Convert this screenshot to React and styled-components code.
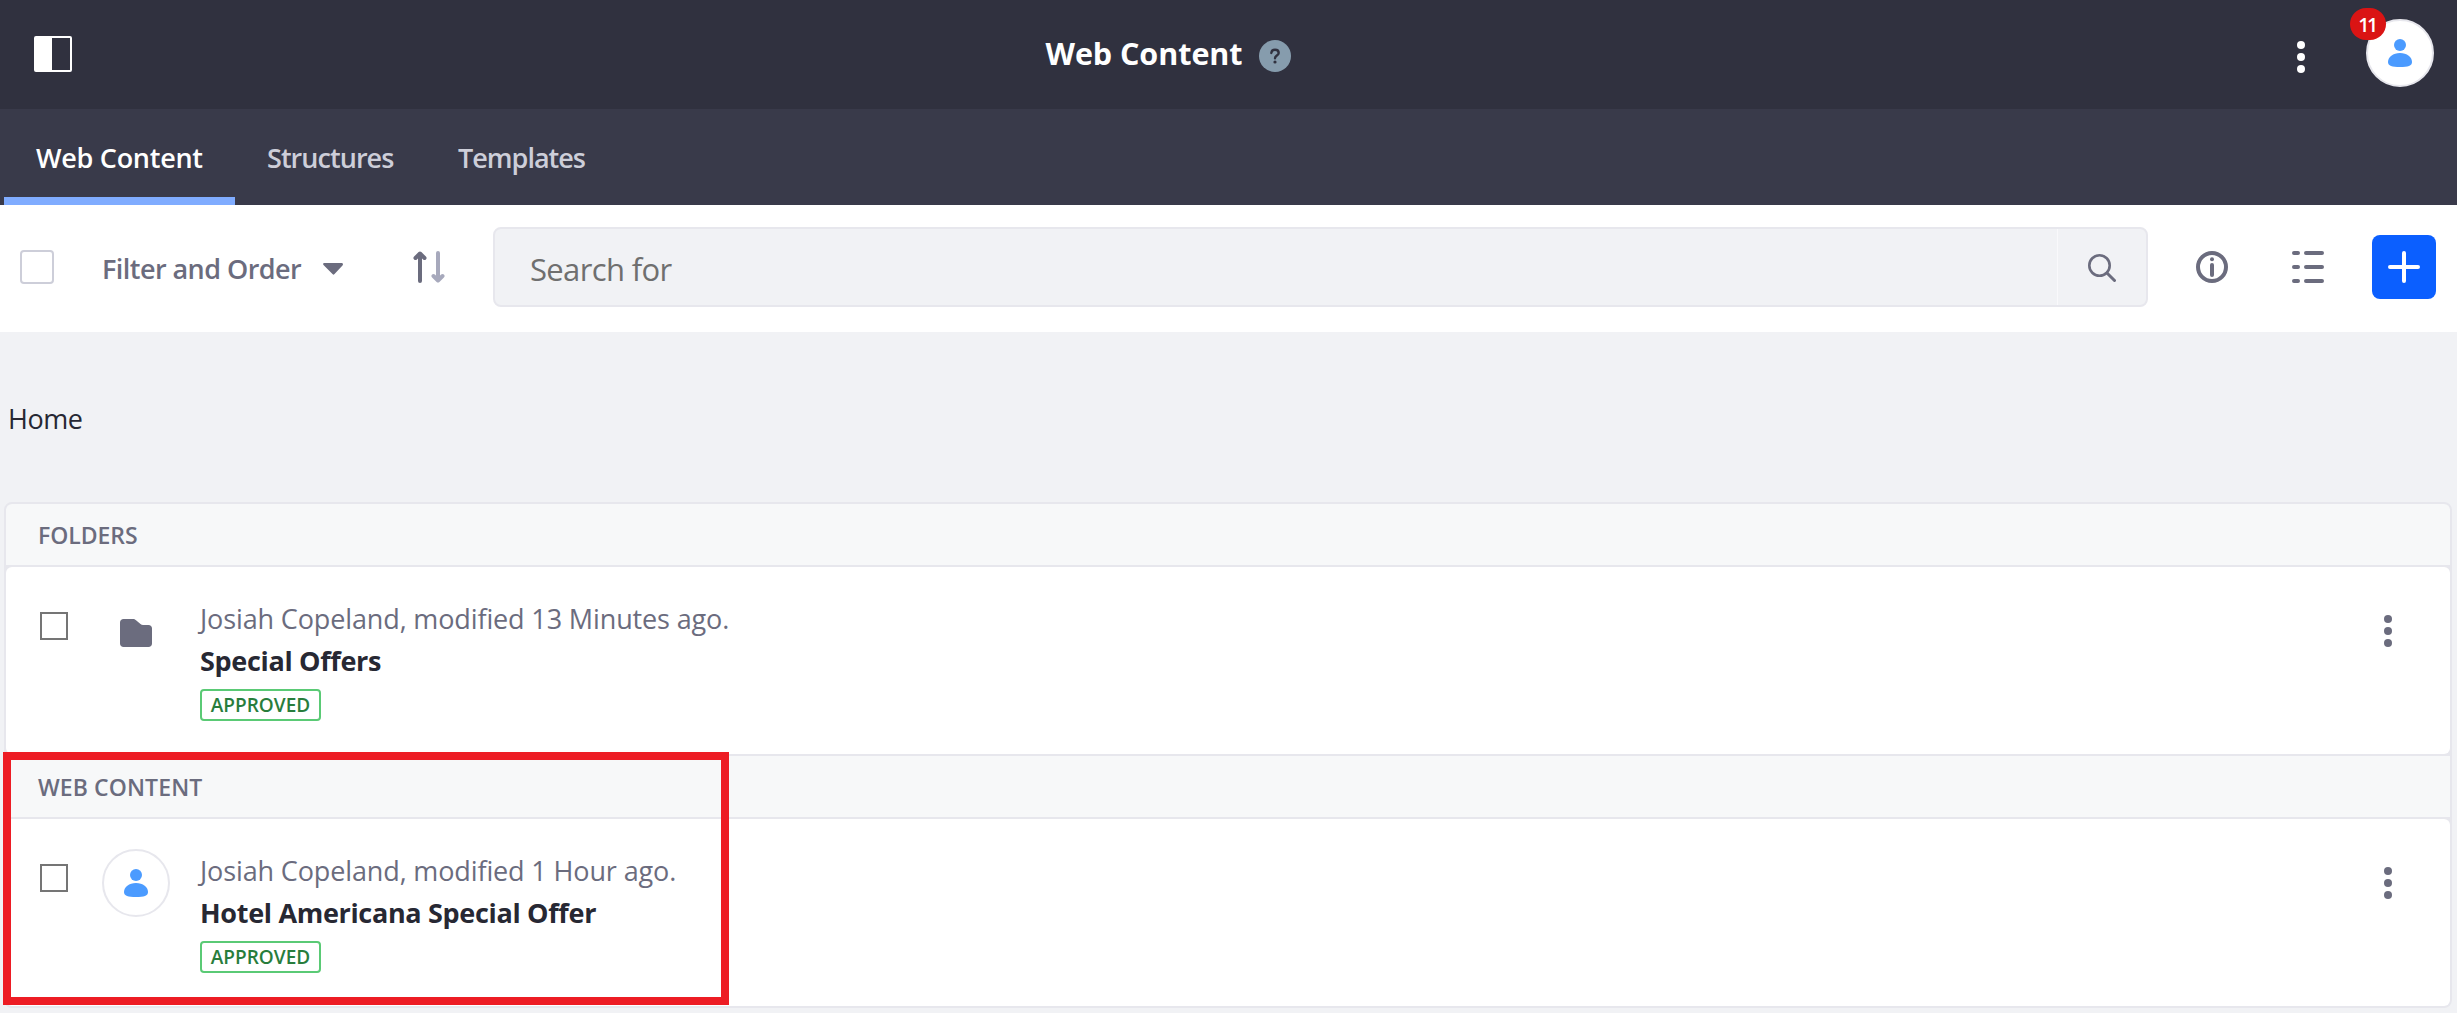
import React from "react";
import styled, { createGlobalStyle } from "styled-components";

const Global = createGlobalStyle`
  * { box-sizing: border-box; }
  body { margin: 0; background: #f1f2f5; color: #272833; font-family: "Open Sans", "Noto Sans", sans-serif; font-size: 27px; overflow: hidden; }
  button { font: inherit; border: 0; background: none; padding: 0; color: inherit; }
`;
const Page = styled.div`height: 1013px; overflow: hidden; display: flex; flex-direction: column;`;
const Header = styled.header`height: 109px; flex: none; background: #30313f; display: grid; grid-template-columns: 1fr auto 1fr; align-items: center; padding: 0 23px 1px 34px;`;
const Title = styled.div`display: flex; align-items: center; gap: 16px; margin-right: 132px;`;
const Text = styled.span`display: inline-block; white-space: nowrap; font-size: ${p => p.$size || 27}px; font-weight: ${p => p.$weight || 400}; letter-spacing: ${p => p.$ls || 0}px; color: ${p => p.$color || "inherit"}; line-height: 42px;`;
const TitleText = styled(Text)`margin-bottom: 2px;`;
const Help = styled.svg`margin-top: 4px;`;
const HeaderRight = styled.div`display: flex; justify-content: flex-end; align-items: center; gap: 61px; margin-left: -132px;`;
const HeaderMenu = styled.button`display: flex; margin-top: 6px;`;
const Avatar = styled.div`width: 68px; height: 68px; flex: none; border-radius: 50%; border: 2px solid #e7e7ed; background: #fff; display: grid; place-items: center; position: relative;`;
const HeaderAvatar = styled(Avatar)`margin-bottom: 2px;`;
const Badge = styled.span`position: absolute; left: -18px; top: -13px; width: 36px; height: 32px; border-radius: 16px; background: #da1414; color: #fff; font-size: 19.5px; font-weight: 600; letter-spacing: -2.5px; padding-right: 2px; line-height: 34px; text-align: center;`;
const Tabs = styled.nav`height: 96px; flex: none; background: #393a4a; display: flex; padding-left: 4px;`;
const Tab = styled.button`height: 96px; width: ${p => p.$w}px; text-align: left; color: ${p => (p.$active ? "#fff" : "#cdced9")}; border-bottom: 8px solid ${p => (p.$active ? "#80acff" : "transparent")}; padding: 10px 0 0 32px;`;
const Toolbar = styled.div`height: 127px; flex: none; background: #fff; display: flex; align-items: center; padding: 0 21px 3px 20px;`;
const SelectAll = styled.span`width: 34px; height: 34px; border: 2px solid #cdced9; border-radius: 4px; margin-right: 48px;`;
const Filter = styled.button`display: flex; align-items: center; justify-content: space-between; width: 241px; color: #6b6c7e; margin-right: 70px; padding-top: 4px;`;
const Search = styled.div`width: 1655px; height: 80px; margin-left: 48px; border: 2px solid #e7e7ed; border-radius: 8px; background: #f1f2f5; display: flex; align-items: stretch;`;
const Placeholder = styled.div`flex: 1; padding: 19px 0 0 35px;`;
const SearchButton = styled.button`width: 89px; border-left: 1px solid #f9f9fb; display: grid; place-items: center; color: #6b6c7e; padding-top: 2px;`;
const Tools = styled.div`display: flex; align-items: center; margin-left: auto; gap: 48px; color: #6b6c7e;`;
const ToolIcon = styled.span`display: flex; margin-right: ${p => p.$mr || 0}px;`;
const Add = styled.button`width: 64px; height: 64px; border-radius: 8px; background: #0b5fff; display: grid; place-items: center;`;
const Crumb = styled.div`height: 170px; flex: none; padding: 66px 0 0 8px;`;
const List = styled.div`margin: 0 5px 0 4px; border: 2px solid #e7e7ed; border-radius: 8px; background: #e7e7ed; position: relative;`;
const Section = styled.div`height: 61px; background: #f7f8f9; border-radius: ${p => (p.$first ? "6px 6px 0 0" : "0")}; padding: 10px 0 0 32px;`;
const Row = styled.div`height: 187px; margin: 2px 0 ${p => (p.$last ? 0 : 2)}px; background: #fff; border-radius: 6px; display: flex; padding: 0 58px 0 34px;`;
const Check = styled.span`width: 28px; height: 28px; border: 2px solid #757575; margin-top: 45px; flex: none;`;
const Sticker = styled.div`width: 68px; height: 68px; margin: 32px 30px 0 34px; flex: none; display: grid; place-items: center;`;
const RowAvatar = styled(Avatar)`margin: 30px 30px 0 34px;`;
const Body = styled.div`flex: 1; display: flex; flex-direction: column; align-items: flex-start; padding-top: 31px;`;
const Label = styled.span`height: 32px; width: 121px; border: 2px solid #5aca75; border-radius: 4px; margin-top: 7px; display: flex; align-items: center; justify-content: center;`;
const RowMenu = styled.button`align-self: flex-start; margin-top: 48px; color: #6b6c7e; display: flex;`;
const Highlight = styled.div`position: absolute; left: -3px; top: 248px; width: 726px; height: 253px; border: 8px solid #ed1c24; pointer-events: none;`;

const Kebab = ({ color = "currentColor" }) => (
  <svg width="8" height="32" fill={color}><circle cx="4" cy="4" r="4" /><circle cx="4" cy="16" r="4" /><circle cx="4" cy="28" r="4" /></svg>
);
const User = () => (
  <svg width="24" height="28" fill="#4b9bff"><circle cx="12" cy="6" r="6" /><path d="M12 14C5 14 0 18 0 23c0 4 4 5 12 5s12-1 12-5c0-5-5-9-12-9z" /></svg>
);

const items = [
  { section: "FOLDERS", sls: -0.05, meta: "Josiah Copeland, modified 13 Minutes ago.", name: "Special Offers", folder: true },
  { section: "WEB CONTENT", sls: 0.1, meta: "Josiah Copeland, modified 1 Hour ago.", name: "Hotel Americana Special Offer" },
];

export default function App() {
  return (
    <Page>
      <Global />
      <Header>
        <svg width="38" height="36"><rect x="1" y="1" width="36" height="34" rx="1" fill="none" stroke="#fff" strokeWidth="2" /><path d="M1 1h17v34H1z" fill="#fff" /></svg>
        <Title>
          <TitleText $size={30.5} $weight={700} $ls={-0.05} $color="#fff">Web Content</TitleText>
          <Help width="32" height="32"><circle cx="16" cy="16" r="16" fill="#869cad" /><path d="M12.300 13c.2-2.200 1.700-3.200 3.700-3.200s3.700 1.200 3.700 3.200c0 2.600-3.700 2.600-3.700 5.200" fill="none" stroke="#30313f" strokeWidth="2.400" strokeLinecap="round" /><circle cx="16" cy="22" r="1.600" fill="#30313f" /></Help>
        </Title>
        <HeaderRight>
          <HeaderMenu><Kebab color="#fff" /></HeaderMenu>
          <HeaderAvatar><User /><Badge>11</Badge></HeaderAvatar>
        </HeaderRight>
      </Header>
      <Tabs>
        <Tab $active $w={231}><Text $weight={600} $ls={-0.27}>Web Content</Text></Tab>
        <Tab $w={191}><Text $weight={600} $ls={-0.95}>Structures</Text></Tab>
        <Tab $w={191}><Text $weight={600} $ls={-1}>Templates</Text></Tab>
      </Tabs>
      <Toolbar>
        <SelectAll />
        <Filter>
          <Text $weight={600} $ls={-0.55}>Filter and Order</Text>
          <svg width="20" height="12"><path d="M1.500 0h17c1.400 0 2 1.400 1 2.400l-8 8.600c-.9 1-1.100 1-2 0l-8.500-8.600C-.5 1.400 0 0 1.500 0z" fill="#6b6c7e" /></svg>
        </Filter>
        <svg width="32" height="32" fill="none" strokeWidth="4" strokeLinecap="round" strokeLinejoin="round"><path d="M7 30V3M2.500 7L7 2.500 11.500 7" stroke="#6b6c7e" /><path d="M25 2v27M20.500 25l4.500 4.500 4.500-4.500" stroke="#a7a9bc" /></svg>
        <Search>
          <Placeholder><Text $size={31} $ls={-0.65} $color="#6f6f6f">Search for</Text></Placeholder>
          <SearchButton><svg width="28" height="28" fill="none" stroke="currentColor" strokeLinecap="round"><circle cx="11.500" cy="11.500" r="10.200" strokeWidth="2.600" /><path d="M19 19l7.500 7.500" strokeWidth="3" /></svg></SearchButton>
        </Search>
        <Tools>
          <ToolIcon $mr={16}><svg width="32" height="32"><circle cx="16" cy="16" r="14" fill="none" stroke="currentColor" strokeWidth="4" /><circle cx="16" cy="8.200" r="2" fill="currentColor" /><path d="M16 14v10" stroke="currentColor" strokeWidth="4" strokeLinecap="round" /></svg></ToolIcon>
          <ToolIcon><svg width="32" height="32" stroke="currentColor" strokeWidth="4" strokeLinecap="round"><path d="M2 2h4M14 2h16M2 16h4M14 16h16M2 30h4M14 30h16" /></svg></ToolIcon>
          <Add><svg width="32" height="32" stroke="#fff" strokeWidth="4" strokeLinecap="round"><path d="M16 2v28M2 16h28" /></svg></Add>
        </Tools>
      </Toolbar>
      <Crumb><Text $ls={-0.5}>Home</Text></Crumb>
      <List>
        {items.map((it, i) => (
          <React.Fragment key={it.section}>
            <Section $first={i === 0}><Text $size={23} $weight={600} $ls={it.sls} $color="#6b6c7e">{it.section}</Text></Section>
            <Row $last={i === 1}>
              <Check />
              {it.folder
                ? <Sticker><svg width="32" height="28" fill="#6b6c7e"><path d="M3.500 0H13c1.200 0 2 .3 3 1.200L20.500 5c.8.700 1.500 1 2.500 1h5.500C30.500 6 32 7.500 32 9.500v15c0 2-1.500 3.500-3.500 3.500h-25C1.500 28 0 26.500 0 24.500v-21C0 1.500 1.500 0 3.500 0z" /></svg></Sticker>
                : <RowAvatar><User /></RowAvatar>}
              <Body>
                <Text $ls={-0.13} $color="#6b6c7e">{it.meta}</Text>
                <Text $ls={-0.32} $weight={700}>{it.name}</Text>
                <Label><Text $size={19} $weight={600} $color="#287d3c">APPROVED</Text></Label>
              </Body>
              <RowMenu><Kebab /></RowMenu>
            </Row>
          </React.Fragment>
        ))}
        <Highlight />
      </List>
    </Page>
  );
}
